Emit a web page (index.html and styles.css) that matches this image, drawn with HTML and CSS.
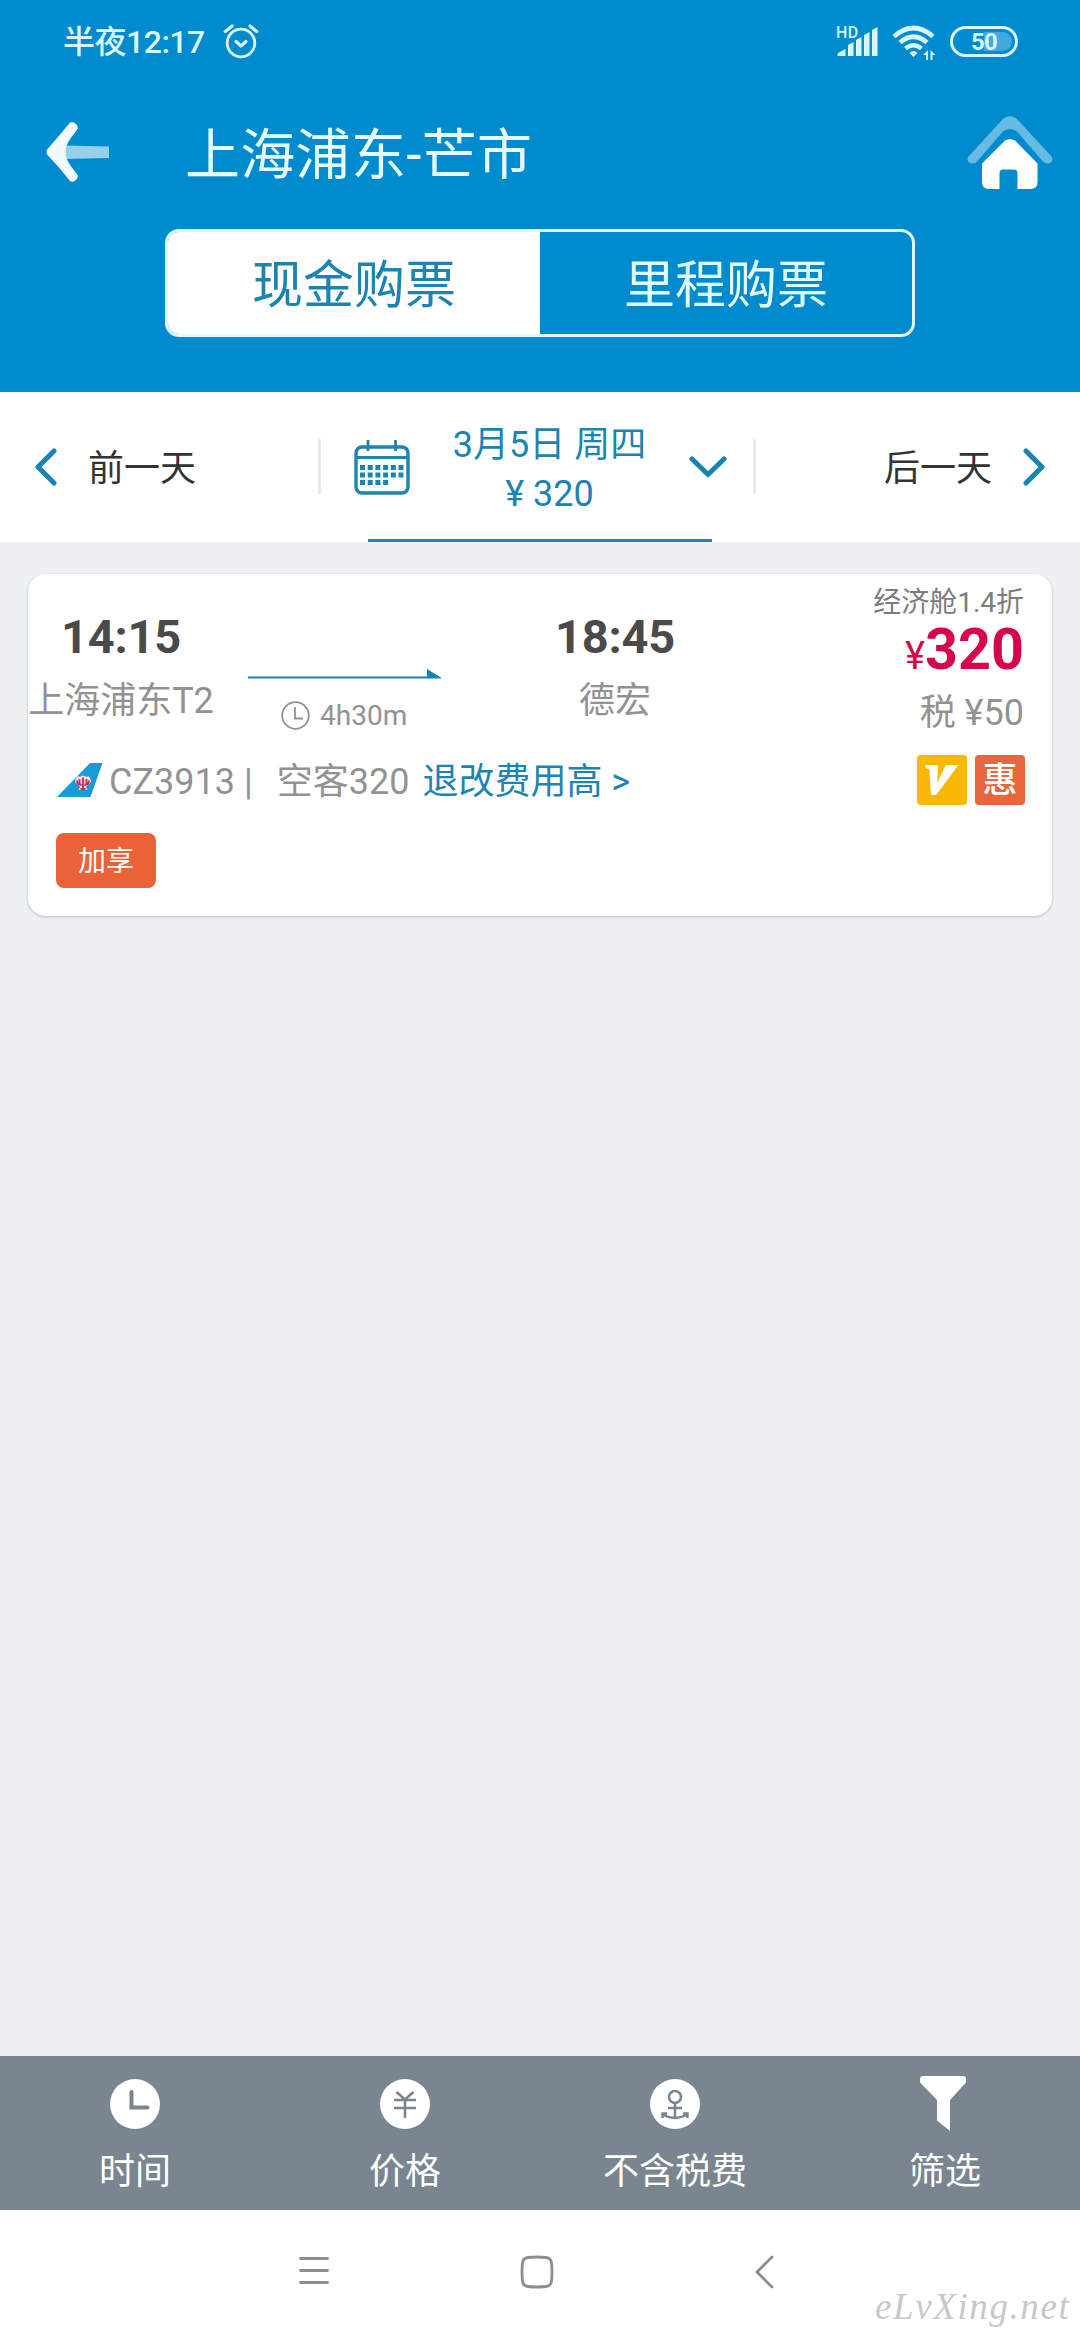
FILE: index.html
```html
<!DOCTYPE html>
<html lang="zh-CN">
<head>
<meta charset="utf-8">
<title>上海浦东-芒市</title>
<link rel="stylesheet" href="styles.css">
</head>
<body>
<div class="screen">
  <header class="header">
    <div class="status">
      <span class="status-time">半夜12:17</span>
      <svg class="alarm" width="36" height="36" viewBox="0 0 36 36" fill="none" stroke="#d9f6ff" stroke-width="2.8" stroke-linecap="round" stroke-linejoin="round"><circle cx="18" cy="20" r="13.8"/><path stroke-width="3.200" d="M13 18.500l5 4.500 5-4.500"/><path stroke-width="3.200" d="M2.300 8.500L9 3M27 3l6.700 5.500"/></svg>
      <div class="status-right">
        <svg class="signal" width="42" height="34" viewBox="0 0 42 34" fill="#d9f6ff"><text class="hd" x="0" y="12.500">HD</text><path d="M1.500 31v-2q0-1 8-5v7zM12 31V20l5.500-3v14zM20 31V15l5.500-3v19zM28 31V10l5.500-3v24zM36 31V5l5.500-3v29z"/></svg>
        <svg class="wifi" width="44" height="36" viewBox="0 0 44 36"><g fill="none" stroke="#d9f6ff" stroke-width="4.600"><path d="M2 12.500Q21.500-4.500 41 12.500M8 18.500Q21.500 7 35 18.500M13.500 24.500Q21.500 18 29.500 24.500"/></g><path fill="#d9f6ff" d="M17.500 29q4-4 8 0l-4 4zM36 26v10h-2v-5h-3zM38.500 36V26l5 5h-3v5z"/></svg>
        <span class="battery"><span class="battery-level"></span><span class="battery-text">50</span></span>
      </div>
    </div>
    <div class="titlebar">
      <svg width="64" height="62" viewBox="0 0 64 62"><path fill="#98d0ec" d="M18 24.500L63 25.500V37L18 38z"/><path fill="#f2fbff" d="M24 1.500q3-1.500 6 1.500 3 3 1 6Q22 20 20.500 25q-2 6 0 12Q22 42 31 53q2 3-1 6-3 3-6 1Q13 46 1.500 34-.5 31 1.500 28 13 15 24 1.500z"/></svg>
      <h1 class="title">上海浦东-芒市</h1>
      <svg class="home" width="86" height="73" viewBox="0 0 86 73"><path fill="#66bbe5" d="M36.500 2.500Q43-2 49.500 2.500L84.500 40.500Q87 45 83 47q-4 1.500-7-1.500L50 15.500q-7-5-14 0L10 45.500q-3 3-7 1.500-4-2-1.500-6.500z"/><path fill="#fff" d="M38 24.500q5-3 10 0L70.500 47.500V66q0 7-7 7H50.500V57q0-3.500-3.500-3.500H36q-3.500 0-3.500 3.500V73H22q-7 0-7-7V47.500z"/></svg>
    </div>
    <div class="segment">
      <span class="seg seg-on">现金购票</span>
      <span class="seg">里程购票</span>
    </div>
  </header>

  <nav class="days">
    <div class="day day-prev">
      <svg width="22" height="38" viewBox="0 0 22 38"><path class="chev" d="M19 3L3 19l16 16"/></svg>
      <span>前一天</span>
    </div>
    <div class="day-current">
      <svg class="calendar" width="56" height="56" viewBox="0 0 56 56" fill="none" stroke="#1c84b2"><rect x="2" y="8" width="52" height="46" rx="6" stroke-width="3.400"/><path stroke-width="2.800" d="M2 18.500h52M14 1v11M41.500 1v11"/><path stroke-width="5" stroke-dasharray="5 2.700" d="M6 28.500h44M6 36h44M6 43.500h29"/></svg>
      <div class="date"><span>3月5日 周四</span><span>¥ 320</span></div>
      <svg class="down" width="38" height="22" viewBox="0 0 38 22"><path class="chev" d="M3 3l16 15.500L35 3"/></svg>
    </div>
    <div class="day day-next">
      <span>后一天</span>
      <svg width="22" height="38" viewBox="0 0 22 38"><path class="chev" d="M3 3l16 16L3 35"/></svg>
    </div>
  </nav>

  <main class="list">
    <article class="card">
      <div class="trip">
        <div class="stop stop-from"><span class="clock">14:15</span><span class="place">上海浦东T2</span></div>
        <div class="leg">
          <svg width="193" height="10" viewBox="0 0 193 10" fill="#1583b5"><path d="M0 7.500h179V0l14 8.500v1H0z"/></svg>
          <div class="duration">
            <svg width="29" height="29" viewBox="0 0 29 29" fill="none" stroke="#929292" stroke-width="1.800"><circle cx="14.500" cy="14.500" r="13.300"/><path d="M14 6v11.500h8"/></svg>
            <span>4h30m</span>
          </div>
        </div>
        <div class="stop stop-to"><span class="clock">18:45</span><span class="place">德宏</span></div>
        <div class="fare">
          <span class="cabin">经济舱1.4折</span>
          <span class="price"><small>¥</small>320</span>
          <span class="tax">税 ¥50</span>
        </div>
      </div>
      <div class="info">
        <svg class="tail" width="46" height="34" viewBox="0 0 46 34"><path fill="#199bd8" d="M0 34L33 0h12.500L33.500 34z"/><path fill="#f5e5ed" d="M19 15q2-3 4-1 3-3 6 0 3-2 4 1 2 4-1 6-1 2-3 2l1 4h-8l1-4q-2 0-3-2-3-2-1-6z"/><path d="M26 14.500V26M22.500 16v4q0 1.500 2 2.500M29.500 16v4q0 1.500-2 2.500M20 17.500q0 3 2 4.500M32 17.500q0 3-2 4.500M23.500 26h5" fill="none" stroke="#d32750" stroke-width="1.900"/></svg>
        <span class="flight">CZ3913</span><span class="bar">|</span><span class="plane">空客320</span>
        <span class="rules">退改费用高 &gt;</span>
        <div class="badges">
          <svg width="50" height="50" viewBox="0 0 50 50"><rect width="50" height="50" rx="4" fill="#f9b803"/><path fill="#fff" d="M8 10h11q2.500 0 2 3l-1 15L29 10h12.500L19 40h-5L12.500 15q0-1.500-3.500-1.500z"/></svg>
          <span class="hui">惠</span>
        </div>
      </div>
      <span class="perk">加享</span>
    </article>
  </main>

  <footer class="tools">
    <div class="tool">
      <svg width="56" height="56" viewBox="0 0 56 56"><circle cx="28" cy="28" r="25" fill="#fff"/><path d="M24.500 16v15.500h16" fill="none" stroke="#7a8590" stroke-width="4" stroke-linecap="round"/></svg>
      <span>时间</span>
    </div>
    <div class="tool">
      <svg width="56" height="56" viewBox="0 0 56 56"><circle cx="28" cy="28" r="25" fill="#fff"/><path d="M19.500 16l8.500 7.500L36.500 16M17 24h22M17 32h22M28 23v19" fill="none" stroke="#7a8590" stroke-width="2.600"/></svg>
      <span>价格</span>
    </div>
    <div class="tool">
      <svg width="56" height="56" viewBox="0 0 56 56"><circle cx="28" cy="28" r="25" fill="#fff"/><g fill="none" stroke="#7a8590" stroke-width="2.500"><circle cx="28" cy="21" r="6"/><path d="M28 27v15M21 32h14M15.500 38.500q12.500 7 25 0M15.500 42V37.500h4.500M40.500 42V37.500H36"/></g></svg>
      <span>不含税费</span>
    </div>
    <div class="tool">
      <svg width="56" height="56" viewBox="0 0 56 56"><path fill="#fff" d="M6 0h40q3 0 3 3v3.500L33 24v31L20 44.500V24L3 6.500V3q0-3 3-3z"/></svg>
      <span>筛选</span>
    </div>
  </footer>

  <div class="sysnav">
    <svg class="sys-menu" width="32" height="32" viewBox="0 0 32 32"><path class="sys" d="M2.500 3.500h27M2.500 15.500h27M2.500 27.500h27"/></svg>
    <svg class="sys-home" width="34" height="34" viewBox="0 0 34 34"><path class="sys" d="M8 2.500q9-1 18 0 5 .5 5.500 5.500 1 9 0 18-.5 5-5.500 5.500-9 1-18 0-5-.5-5.500-5.500-1-9 0-18Q3 3 8 2.500z"/></svg>
    <svg class="sys-back" width="20" height="34" viewBox="0 0 20 34"><path class="sys" d="M18 2L3 17l15 15"/></svg>
    <span class="watermark">eLvXing.net</span>
  </div>
</div>
</body>
</html>
```

FILE: styles.css
```css
* { box-sizing: border-box; }
body { margin: 0; }
svg { display: block; flex: none; }

.screen {
  display: flex;
  flex-direction: column;
  width: 1080px;
  height: 2340px;
  overflow: hidden;
  background: #edf1f4;
  font-family: Roboto, "Noto Sans CJK SC", sans-serif;
  font-size: 36px;
  line-height: 48px;
  color: #333;
  white-space: nowrap;
}

/* header */
.header { height: 392px; background: #008bce; }
.status {
  display: flex;
  align-items: center;
  height: 82px;
  padding: 0 62px 0 63px;
  color: #d9f6ff;
}
.status-time {
  width: 160px;
  margin-top: 2px;
  font-size: 32px;
  font-weight: 500;
  letter-spacing: -.5px;
}
.alarm { margin-top: -1px; }
.status-right { display: flex; align-items: center; margin-left: auto; }
.signal { overflow: visible; margin-top: 1px; }
.hd { font-size: 16px; font-weight: 500; letter-spacing: .5px; }
.wifi { margin: 2px 14px 0 14px; }
.battery {
  position: relative;
  width: 68px;
  height: 31px;
  border: 3px solid #d9f6ff;
  border-radius: 16px;
}
.battery-level {
  position: absolute;
  top: 3px;
  right: 3px;
  width: 28px;
  height: 19px;
  border-radius: 0 10px 10px 0;
  background: #40a8dc;
}
.battery-text {
  position: relative;
  display: block;
  font-size: 24px;
  font-weight: 700;
  line-height: 26px;
  letter-spacing: -.8px;
  text-align: center;
}

.titlebar { display: flex; align-items: flex-start; height: 147px; padding: 39px 27px 0 46px; }
.title {
  margin: 1px auto 0 75px;
  font-size: 55px;
  font-weight: 400;
  line-height: 66px;
  letter-spacing: .3px;
  color: #e6fbff;
}
.home { margin-top: -5px; }

.segment {
  display: flex;
  width: 750px;
  height: 108px;
  margin: 0 auto;
  overflow: hidden;
  border: 3px solid #e0f7ff;
  border-radius: 14px;
}
.seg {
  flex: 1;
  font-size: 51px;
  line-height: 107px;
  text-align: center;
  color: #e0fbff;
}
.seg-on { background: #fff; color: #1c84b2; }

/* day switcher */
.days { display: flex; height: 150px; background: #fff; }
.chev {
  fill: none;
  stroke: #1583b5;
  stroke-width: 5;
  stroke-linecap: round;
  stroke-linejoin: round;
}
.day { display: flex; align-items: center; width: 318px; padding: 0 35px; }
.day-prev { gap: 31px; }
.day-next { width: 324px; justify-content: flex-end; gap: 31px; }
.day span { margin-top: 4px; }
.day-current {
  position: relative;
  display: flex;
  align-items: center;
  width: 438px;
  padding: 0 29px 0 36px;
  background: linear-gradient(#1c84b2, #1c84b2) 50px 147px / 344px 3px no-repeat;
  color: #1c84b2;
}
.day-current::before, .day-current::after {
  content: "";
  position: absolute;
  top: 47px;
  width: 3px;
  height: 55px;
  background: #e8ebed;
}
.day-current::before { left: 0; }
.day-current::after { right: 0; }
.date {
  display: flex;
  flex: 1;
  flex-direction: column;
  height: 150px;
  padding-top: 29px;
  line-height: 49px;
  text-align: center;
}

/* flight card */
.list { flex: 1; padding: 32px 28px; }
.card {
  height: 342px;
  border-radius: 18px;
  background: #fff;
  box-shadow: 0 1px 3px rgba(0, 0, 0, .22);
}
.trip { display: flex; height: 178px; }
.stop { display: flex; flex-direction: column; align-items: center; padding-top: 33px; }
.stop-from { width: 186px; }
.stop-to { width: 284px; }
.clock {
  font-size: 47px;
  font-weight: 700;
  line-height: 60px;
  letter-spacing: -.2px;
  color: #4a4a4a;
}
.place { margin-top: 10px; color: #929292; }
.leg { width: 259px; padding: 95px 0 0 34px; }
.duration {
  display: flex;
  align-items: center;
  gap: 10px;
  height: 38px;
  margin: 17px 0 0 33px;
  font-size: 28px;
  color: #929292;
}
.duration span { margin-top: 2px; }
.fare {
  display: flex;
  flex: 1;
  flex-direction: column;
  align-items: flex-end;
  padding: 11px 28px 0 0;
  color: #929292;
}
.cabin { font-size: 28px; line-height: 36px; color: #7d7d7d; }
.price { height: 58px; font-size: 57.5px; font-weight: 700; line-height: 57px; color: #d9054c; }
.price small { font-size: 38px; font-weight: 400; }
.tax { margin-top: 10px; }
.info { display: flex; align-items: center; height: 56px; padding: 0 27px 0 29px; color: #929292; }
.info > span { padding-top: 4px; }
.flight { margin-left: 6px; }
.bar { margin-left: 9px; }
.plane { margin-left: 24px; }
.rules { margin-left: 13px; color: #1c84b2; }
.badges { display: flex; gap: 8px; margin-left: auto; }
.hui {
  width: 50px;
  height: 50px;
  border-radius: 4px;
  background: #e9653c;
  font-size: 35px;
  font-weight: 500;
  line-height: 52px;
  text-align: center;
  color: #fff;
}
.perk {
  display: block;
  width: 100px;
  height: 55px;
  margin: 25px 0 0 28px;
  border-radius: 8px;
  background: #eb6138;
  font-size: 28px;
  line-height: 57px;
  text-align: center;
  color: #fff;
}

/* bottom toolbar */
.tools { display: flex; height: 154px; background: #7a8590; color: #fff; }
.tool { display: flex; flex: 1; flex-direction: column; align-items: center; padding-top: 20px; }
.tool span { margin-top: 16px; }

/* system navigation */
.sysnav {
  position: relative;
  display: flex;
  align-items: flex-start;
  height: 130px;
  padding: 45px 0 0 298px;
  background: #fff;
}
.sys { fill: none; stroke: #8e8e8e; stroke-width: 2.8; stroke-linecap: round; }
.sys-home { margin-left: 190px; }
.sys-back { margin-left: 200px; }
.watermark {
  position: absolute;
  left: 875px;
  top: 73px;
  font-family: "Liberation Serif", serif;
  font-size: 37px;
  font-style: italic;
  letter-spacing: 1.6px;
  color: #c8c8c8;
}
```
